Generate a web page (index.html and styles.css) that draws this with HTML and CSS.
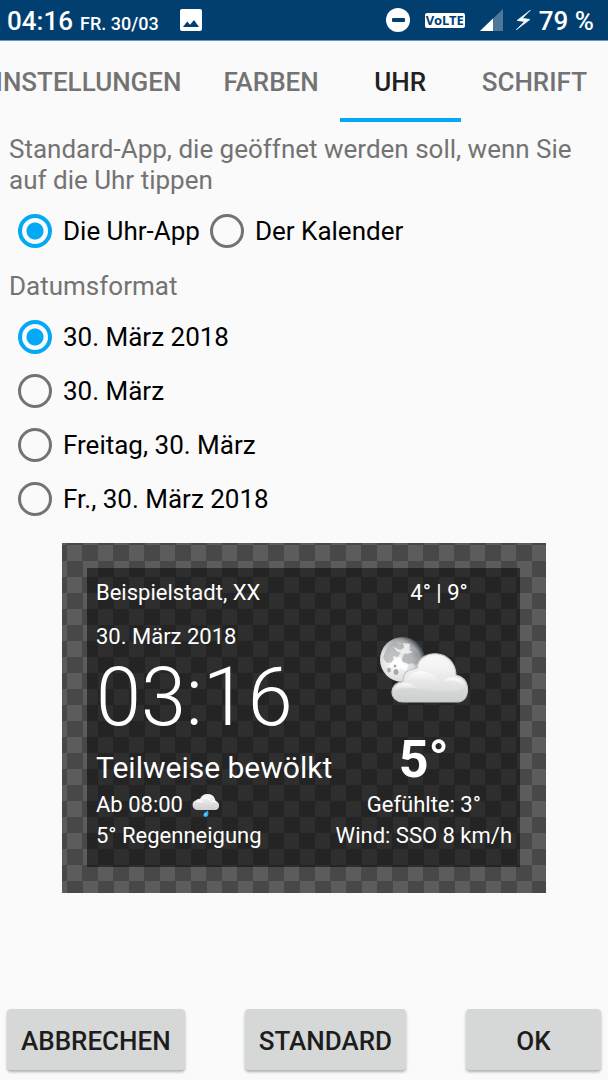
FILE: index.html
```html
<!DOCTYPE html>
<html lang="de">
<head>
<meta charset="utf-8">
<meta name="viewport" content="width=device-width, initial-scale=1">
<title>Uhr</title>
<link rel="stylesheet" href="styles.css">
</head>
<body>
<header class="status">
  <span class="status-time">04:16</span>
  <span class="status-date">FR. 30/03</span>
  <svg class="status-photo" width="22" height="22" viewBox="0 0 22 22" aria-hidden="true"><rect width="22" height="22" rx="2" fill="#fff"/><path d="M3 18 7.2 12.5 10 15.8 14 11 19 18Z" fill="#023f71"/></svg>
  <svg class="status-dnd" width="24" height="24" viewBox="0 0 24 24" aria-hidden="true"><circle cx="12" cy="12" r="12" fill="#fff"/><rect x="6" y="10" width="13" height="4" rx="1" fill="#023f71"/></svg>
  <span class="status-volte">VoLTE</span>
  <svg class="status-signal" width="23" height="22" viewBox="0 0 23 22" aria-hidden="true"><path d="M23 0V22H0Z" fill="#4d7899"/><path d="M13 9.5V22H0Z" fill="#fff"/></svg>
  <svg class="status-bolt" width="15" height="20" viewBox="0 0 15 20" aria-hidden="true"><path d="M14.5 0 1 10.5 8.500 11.500 0 20 14 9.500 6.500 8.200Z" fill="#fff" stroke="#fff" stroke-width=".6"/></svg>
  <span class="status-battery">79 %</span>
</header>
<nav class="tabs">
  <button class="tab" type="button">EINSTELLUNGEN</button>
  <button class="tab" type="button">FARBEN</button>
  <button class="tab tab-active" type="button" aria-current="page">UHR</button>
  <button class="tab" type="button">SCHRIFT</button>
</nav>
<main class="content">
  <fieldset class="group">
    <legend class="heading">Standard-App, die geöffnet werden soll, wenn Sie auf die Uhr tippen</legend>
    <div class="options options-row">
      <label class="option"><input class="radio" type="radio" name="app" checked>Die Uhr-App</label>
      <label class="option"><input class="radio" type="radio" name="app">Der Kalender</label>
    </div>
  </fieldset>
  <fieldset class="group">
    <legend class="heading">Datumsformat</legend>
    <div class="options">
      <label class="option"><input class="radio" type="radio" name="format" checked>30. März 2018</label>
      <label class="option"><input class="radio" type="radio" name="format">30. März</label>
      <label class="option"><input class="radio" type="radio" name="format">Freitag, 30. März</label>
      <label class="option"><input class="radio" type="radio" name="format">Fr., 30. März 2018</label>
    </div>
  </fieldset>
  <section class="preview">
    <div class="widget">
      <div class="widget-top"><span>Beispielstadt, XX</span><span class="range">4° | 9°</span></div>
      <div class="widget-main">
        <div class="widget-left">
          <div class="line">30. März 2018</div>
          <div class="clock">03:16</div>
          <div class="condition">Teilweise bewölkt</div>
          <div class="line forecast">Ab 08:00
            <svg width="28" height="26" viewBox="0 0 28 26" aria-hidden="true">
              <defs><linearGradient id="small" x1="0" y1="0" x2="0" y2="1"><stop offset="0" stop-color="#fafafa"/><stop offset="1" stop-color="#cfcfcf"/></linearGradient></defs>
              <path d="M5 18A5 5 0 0 1 4 8.3Q5 6.5 8 6.8A8 7.5 0 0 1 23 7Q23.5 9 23.3 9A4.6 4.6 0 0 1 23.5 18Z" fill="url(#small)"/>
              <path d="M4 10Q7 8 10 10M10 7Q14 4 18 8M19 10Q22 8 24 10" fill="none" stroke="#fff" stroke-width="1.5"/>
              <path d="M16 18.5Q17.5 25 13.8 25C10 25 10.5 21 16 18.5Z" fill="#35aef0"/><circle cx="13.5" cy="22.5" r="1" fill="#8ddcff"/>
            </svg>
          </div>
          <div class="line line-last">5° Regenneigung</div>
        </div>
        <div class="widget-right">
          <svg class="weather" width="88" height="66" viewBox="0 0 88 66" aria-hidden="true">
            <defs>
              <radialGradient id="moon" cx=".35" cy=".6" r=".7"><stop offset="0" stop-color="#fff"/><stop offset=".55" stop-color="#dcdcdc"/><stop offset=".8" stop-color="#999ca0"/><stop offset="1" stop-color="#1f2831"/></radialGradient>
              <linearGradient id="cloud" x1="0" y1="0" x2="0" y2="1"><stop offset="0" stop-color="#f6f6f6"/><stop offset=".55" stop-color="#e7e8e7"/><stop offset="1" stop-color="#cfd1d0"/></linearGradient>
              <linearGradient id="puff" x1="0" y1="0" x2="0" y2="1"><stop offset="0" stop-color="#fff"/><stop offset="1" stop-color="#fff" stop-opacity="0"/></linearGradient>
            </defs>
            <circle cx="22.5" cy="22.5" r="22.5" fill="url(#moon)"/>
            <path d="M5 15Q8 7 15 5L20 8 26 6 24 10 28 12 21 15 18 20 13 19 14 25 7 26 3 21Z" fill="#999ea1" opacity=".55"/>
            <path d="M25 15 32 12 38 16 41 23 36 28 31 26 27 29 21 24Z" fill="#878d92" opacity=".5"/>
            <path d="M13 10 20 13 24 11 23 6 30 7 29 13 33 15 27 17 18 15Z" fill="#f2f2f2" opacity=".85"/>
            <path d="M13 23 20 20 23 25 29 27 26 34 20 31 16 37 15 30 8 31Z" fill="#fff" opacity=".85"/>
            <g fill="#a8abac"><ellipse cx="9" cy="33" rx="2" ry="2.5"/><ellipse cx="16" cy="35" rx="2.5" ry="3"/><circle cx="15" cy="29" r="1.5"/></g>
            <path d="M23 65A10.500 10 0 0 1 22 45Q22 44 23 44Q23 33 34 32Q36 31 37 31C39 11 75 11 76 38Q88 41 87.500 53Q87 65 76 65Z" fill="url(#cloud)" stroke="#c4c6c5" stroke-width="1.200"/>
            <path d="M37 34C42 14 67 14 73 37Q50 44 37 34Z" fill="url(#puff)" opacity=".45"/>
            <path d="M26 43C30 33 44 33 49 36Q56 38 59 44Q44 42 26 43Z" fill="url(#puff)" opacity=".75"/>
            <path d="M15 53C15 44 31 43 38 52Q25 50 15 53Z" fill="url(#puff)" opacity=".75"/>
            <path d="M63 44C70 37 84 40 85 50Q77 42 63 44Z" fill="url(#puff)" opacity=".75"/>
            <path d="M14 54Q24 49 38 52Q65 58 86 51Q85 64 75 64H23Q15 63 14 54Z" fill="#c8cac9" opacity=".35"/>
          </svg>
          <div class="temp">5°</div>
          <div class="line">Gefühlte: 3°</div>
          <div class="line line-last">Wind: SSO 8 km/h</div>
        </div>
      </div>
    </div>
  </section>
</main>
<footer class="actions">
  <button class="action" type="button">ABBRECHEN</button>
  <button class="action" type="button">STANDARD</button>
  <button class="action" type="button">OK</button>
</footer>
</body>
</html>
```
FILE: styles.css
```css
* { box-sizing: border-box; }
body {
  margin: 0;
  min-height: 100vh;
  display: flex;
  flex-direction: column;
  background: #fafafa;
  color: #000;
  font: 26px/31px Roboto, sans-serif;
}
.status {
  display: flex;
  align-items: center;
  height: 41px;
  padding: 0 14px 0 7px;
  background: #023f71;
  border-bottom: 1px solid #6f93b0;
  color: #fff;
  font-weight: 500;
}
.status-time, .status-battery { padding-top: 2px; }
.status-date { margin: 6px 0 0 7px; font-size: 18px; }
.status-photo { margin-left: 21px; }
.status-dnd { margin-left: auto; }
.status-volte {
  margin-left: 15px;
  padding: 0 1px;
  border-radius: 2px;
  background: #fff;
  color: #023f71;
  font: 700 13px/15px "Noto Sans", sans-serif;
}
.status-signal { margin-left: 15px; }
.status-bolt { margin: 0 8px 0 13px; }
.tabs { display: flex; justify-content: flex-end; overflow: hidden; }
.tab {
  flex: none;
  min-width: 121px;
  height: 81px;
  padding: 5px 21px 0;
  border: 0;
  border-bottom: 4px solid transparent;
  background: none;
  color: #737373;
  font: 500 26px/31px Roboto, sans-serif;
}
.tab-active { border-color: #03a9f4; color: #212121; }
.content { flex: 1; padding: 12px 9px 0; }
.group { margin: 0; padding: 0; border: 0; min-width: 0; }
.heading { padding: 0; color: #737373; }
.options { padding: 8px 9px 12px; }
.options-row { display: flex; gap: 10px; padding-bottom: 13px; }
.option { display: flex; align-items: center; gap: 11px; height: 54px; }
.radio {
  appearance: none;
  flex: none;
  width: 34px;
  height: 34px;
  margin: 0;
  border: 3px solid #737373;
  border-radius: 50%;
}
.radio:checked {
  border-width: 4px;
  border-color: #03a9f4;
  background: radial-gradient(circle, #03a9f4 8px, transparent 9px);
}
.preview {
  margin: 5px 53px 0;
  padding: 25px 26px 26px 25px;
  background: repeating-conic-gradient(#484848 0 25%, #5c5c5c 0 50%) 5px 2px / 31px 32px;
  color: #fff;
  font-size: 22px;
  line-height: 28px;
}
.widget { padding: 11px 8px 14px 9px; background: rgba(0, 0, 0, .5); }
.widget-top { display: flex; justify-content: space-between; margin-bottom: 16px; }
.range { width: 146px; text-align: center; }
.widget-main { display: flex; justify-content: space-between; }
.widget-left, .widget-right { white-space: nowrap; }
.widget-right { text-align: center; }
.line-last { line-height: 34px; }
.clock { font-size: 81px; line-height: 94px; font-weight: 300; }
.condition { font-size: 30px; line-height: 46px; }
.forecast { display: flex; align-items: center; gap: 9px; }
.weather { display: block; margin: 14px auto 26px; }
.temp { font-size: 52px; line-height: 62px; font-weight: 700; }
.actions { display: flex; justify-content: space-between; padding: 0 7px 10px; }
.action {
  min-width: 135px;
  height: 61px;
  padding: 4px 14px 0;
  border: 0;
  border-radius: 4px;
  background: #d6d8d7;
  box-shadow: 0 2px 3px rgba(0, 0, 0, .3);
  color: #1d1d1d;
  font: 500 26px/31px Roboto, sans-serif;
}
```
